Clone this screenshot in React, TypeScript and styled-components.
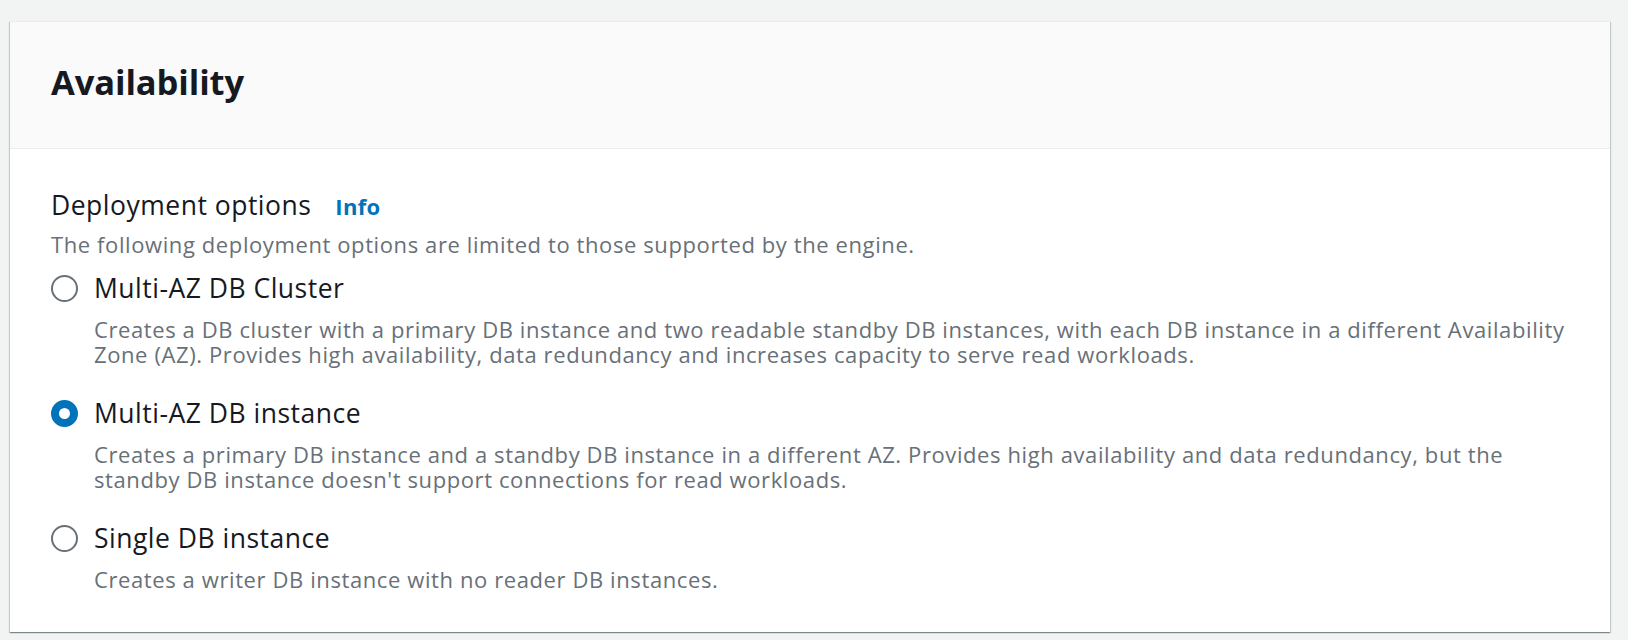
import React, { useState } from "react";
import styled, { createGlobalStyle } from "styled-components";

const GlobalStyle = createGlobalStyle`
  html, body {
    margin: 0;
    padding: 0;
    background: #f2f3f3;
    font-family: "Open Sans", "Noto Sans", "Liberation Sans", sans-serif;
    color: #16191f;
  }
  * { box-sizing: border-box; }
`;

const Page = styled.div`
  padding: 21px 18px 10px 10px;
`;

const Card = styled.section`
  background: #ffffff;
  border-top: 1px solid #eaeded;
  box-shadow: 0 1px 1px 0 rgba(0, 28, 36, 0.3),
    1px 1px 1px 0 rgba(0, 28, 36, 0.15),
    -1px 1px 1px 0 rgba(0, 28, 36, 0.15);
`;

const Header = styled.header`
  background: #fafafa;
  border-bottom: 1px solid #eaeded;
  padding: 37px 40px 43px 41px;
`;

const Heading = styled.h2`
  margin: 0;
  font-size: 34.5px;
  line-height: 46px;
  font-weight: 700;
  color: #16191f;
  letter-spacing: -0.1px;
`;

const Body = styled.div`
  padding: 39px 32px 40px 41px;
`;

const LabelRow = styled.div`
  display: flex;
  align-items: baseline;
  gap: 24px;
`;

const FieldLabel = styled.span`
  font-size: 26.5px;
  line-height: 34px;
  letter-spacing: 0.5px;
  color: #16191f;
`;

const InfoLink = styled.a`
  font-size: 22px;
  line-height: 34px;
  font-weight: 700;
  letter-spacing: 0.3px;
  color: #0073bb;
  text-decoration: none;
  cursor: pointer;
`;

const Constraint = styled.div`
  margin-top: 9px;
  font-size: 22px;
  line-height: 25px;
  letter-spacing: 0.6px;
  color: #687078;
`;

const Group = styled.div`
  margin-top: 14px;
  display: flex;
  flex-direction: column;
  gap: 29px;
`;

const Option = styled.label`
  display: grid;
  grid-template-columns: 27px 1fr;
  column-gap: 16px;
  cursor: pointer;
`;

const Control = styled.span<{ $checked: boolean }>`
  width: 27px;
  height: 27px;
  margin-top: 3.5px;
  border-radius: 50%;
  background: #ffffff;
  border: ${(p) => (p.$checked ? "8px solid #0073bb" : "2px solid #687078")};
`;

const Texts = styled.span`
  display: flex;
  flex-direction: column;
  gap: 12px;
`;

const OptionTitle = styled.span`
  font-size: 26.5px;
  line-height: 34px;
  letter-spacing: 0.5px;
  color: #16191f;
`;

const OptionDesc = styled.span`
  font-size: 22px;
  line-height: 25px;
  letter-spacing: 0.6px;
  color: #687078;
`;

const options = [
  {
    id: "cluster",
    title: "Multi-AZ DB Cluster",
    desc:
      "Creates a DB cluster with a primary DB instance and two readable standby DB instances, with each DB instance in a different Availability Zone (AZ). Provides high availability, data redundancy and increases capacity to serve read workloads.",
  },
  {
    id: "multi",
    title: "Multi-AZ DB instance",
    desc:
      "Creates a primary DB instance and a standby DB instance in a different AZ. Provides high availability and data redundancy, but the standby DB instance doesn't support connections for read workloads.",
  },
  {
    id: "single",
    title: "Single DB instance",
    desc: "Creates a writer DB instance with no reader DB instances.",
  },
];

export default function App() {
  const [value, setValue] = useState("multi");
  return (
    <>
      <GlobalStyle />
      <Page>
        <Card>
          <Header>
            <Heading>Availability</Heading>
          </Header>
          <Body>
            <LabelRow>
              <FieldLabel>Deployment options</FieldLabel>
              <InfoLink>Info</InfoLink>
            </LabelRow>
            <Constraint>
              The following deployment options are limited to those supported by the engine.
            </Constraint>
            <Group role="radiogroup">
              {options.map((o) => (
                <Option key={o.id} onClick={() => setValue(o.id)}>
                  <Control $checked={value === o.id} role="radio" aria-checked={value === o.id} />
                  <Texts>
                    <OptionTitle>{o.title}</OptionTitle>
                    <OptionDesc>{o.desc}</OptionDesc>
                  </Texts>
                </Option>
              ))}
            </Group>
          </Body>
        </Card>
      </Page>
    </>
  );
}
